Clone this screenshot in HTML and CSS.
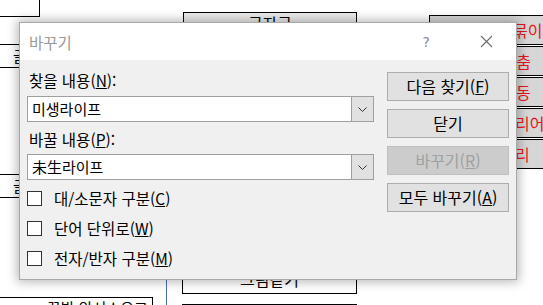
FILE: index.html
```html
<!DOCTYPE html>
<html lang="ko">
	<head>
		<meta charset="utf-8">
		<title>바꾸기</title>
		<link rel="stylesheet" href="styles.css">
	</head>
	<body>
		<div class="sheet">
			<!-- diagram behind the dialog -->
			<div class="shape tl"></div>
			<div class="shape top-mid">글자구</div>
			<div class="shape side s1">글</div>
			<div class="shape side s2">글</div>
			<div class="shape red r1">묶이</div>
			<div class="shape red r2">/춤</div>
			<div class="shape red r3">동</div>
			<div class="shape red r4">리어</div>
			<div class="shape red r5">리</div>
			<div class="shape bot-mid">그림같기</div>
			<div class="shape bot-line"></div>
			<div class="shape bot-left">꿈방 악서스으고</div>
			<div class="blue-line"></div>

			<div class="dialog">
				<div class="titlebar">
					<span class="title">바꾸기</span>
					<span class="help">?</span>
					<span class="close">
						<svg width="13" height="13" viewBox="0 0 13 13"><path d="M1 1L12 12M12 1L1 12" stroke="#6b6b6b" stroke-width="1.1" fill="none"/></svg>
					</span>
				</div>
				<div class="body">
					<div class="fields">
						<div class="label">찾을 내용(<u>N</u>):</div>
						<div class="combo">
							<span class="value">미생라이프</span>
							<span class="drop"><svg width="9" height="5" viewBox="0 0 9 5"><path d="M0.5 0.5L4.5 4.5L8.5 0.5" stroke="#333" fill="none"/></svg></span>
						</div>
						<div class="label second">바꿀 내용(<u>P</u>):</div>
						<div class="combo">
							<span class="value">未生라이프</span>
							<span class="drop"><svg width="9" height="5" viewBox="0 0 9 5"><path d="M0.5 0.5L4.5 4.5L8.5 0.5" stroke="#333" fill="none"/></svg></span>
						</div>
						<div class="checks">
							<label class="check"><span class="box"></span>대/소문자 구분(<u>C</u>)</label>
							<label class="check"><span class="box"></span>단어 단위로(<u>W</u>)</label>
							<label class="check"><span class="box"></span>전자/반자 구분(<u>M</u>)</label>
						</div>
					</div>
					<div class="buttons">
						<div class="btn">다음 찾기(<u>F</u>)</div>
						<div class="btn">닫기</div>
						<div class="btn disabled">바꾸기(<u>R</u>)</div>
						<div class="btn">모두 바꾸기(<u>A</u>)</div>
					</div>
				</div>
			</div>
		</div>
	</body>
</html>
```

FILE: styles.css
```css
body{
	margin:0;
	background:#fff;
	font-family:"Noto Sans CJK KR","Liberation Sans",sans-serif;
	color:#000;
}
.sheet{
	position:relative;
	width:543px;
	height:305px;
	overflow:hidden;
}

/* background shapes */
.shape{
	position:absolute;
	box-sizing:border-box;
	border:1px solid #000;
	font-size:15px;
	line-height:15px;
}
.tl{
	left:-2px;
	top:-2px;
	width:42px;
	height:19px;
}
.top-mid{
	left:183px;
	top:12px;
	width:174px;
	height:30px;
	background:#ececec;
	text-align:center;
	padding-top:3px;
	font-size:16px;
}
.side{
	left:-2px;
	width:40px;
	height:24px;
	line-height:22px;
	padding-left:14px;
}
.s1{ top:44px; }
.s2{ top:174px; }
.red{
	left:429px;
	width:130px;
	height:30px;
	background:#d6d6d6;
	color:#e8141b;
	font-size:16px;
	line-height:28px;
	padding-left:83px;
}
.r1{ top:15px; }
.r2{ top:46px; padding-left:80px; }
.r3{ top:77px; padding-left:86px; }
.r4{ top:108px; padding-left:85px; }
.r5{ top:139px; padding-left:85px; }
.bot-mid{
	left:182px;
	top:262px;
	width:175px;
	height:32px;
	text-align:center;
	padding-top:9px;
	font-size:16px;
}
.bot-line{
	left:182px;
	top:304px;
	width:175px;
	height:4px;
	border-bottom:none;
}
.bot-left{
	left:-2px;
	top:297px;
	width:155px;
	height:20px;
	padding-left:48px;
	padding-top:2px;
}
.blue-line{
	position:absolute;
	left:166px;
	top:270px;
	width:1px;
	height:40px;
	background:#4a6fc0;
}

/* dialog */
.dialog{
	position:absolute;
	left:19px;
	top:22px;
	width:498px;
	height:258px;
	box-sizing:border-box;
	border:1px solid #a8a8a8;
	background:#f0f0f0;
	box-shadow:0 0 10px 2px rgba(0,0,0,0.28);
	display:flex;
	flex-direction:column;
}
.titlebar{
	height:37px;
	background:#fff;
	display:flex;
	align-items:center;
	padding-left:9px;
	font-size:15.5px;
}
.title{
	color:#9a9a9a;
}
.help{
	margin-left:auto;
	color:#8a8a8a;
	font-family:"DejaVu Sans",sans-serif;
	font-size:14px;
	margin-right:50px;
}
.close{
	display:flex;
	margin-right:23px;
}
.body{
	flex:1;
	display:flex;
	gap:13px;
	padding:9px 7px 0 7px;
	font-size:15.5px;
}
.fields{
	width:347px;
}
.label{
	line-height:22px;
	height:22px;
	padding-left:2px;
}
.label.second{
	margin-top:6px;
}
.combo{
	margin-top:5px;
	height:26px;
	box-sizing:border-box;
	border:1px solid #a0a0a0;
	background:#fff;
	display:flex;
}
.label.second + .combo{
	margin-top:4px;
}
.value{
	flex:1;
	line-height:24px;
	padding-left:4px;
	font-size:15px;
}
.drop{
	width:21px;
	background:#e1e1e1;
	border-left:1px solid #a0a0a0;
	display:flex;
	align-items:center;
	justify-content:center;
}
.checks{
	margin-top:7px;
	display:flex;
	flex-direction:column;
	gap:8px;
}
.check{
	display:flex;
	align-items:center;
	height:22px;
}
.box{
	width:13px;
	height:13px;
	border:1px solid #333;
	background:#fff;
	margin-right:12px;
}
.buttons{
	margin-top:3px;
	display:flex;
	flex-direction:column;
	gap:8px;
}
.btn{
	width:122px;
	height:29px;
	box-sizing:border-box;
	border:1px solid #adadad;
	background:#e1e1e1;
	text-align:center;
	line-height:27px;
	font-size:16px;
}
.btn.disabled{
	color:#a0a0a0;
	background:#cccccc;
	border-color:#bfbfbf;
}
```
